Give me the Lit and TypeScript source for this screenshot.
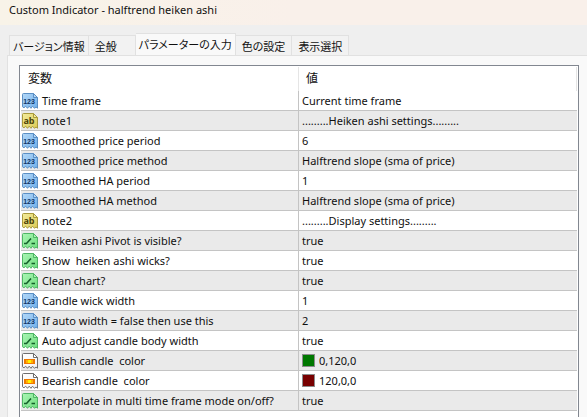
import { LitElement, html, svg, css } from "lit";
import { customElement, property, state } from "lit/decorators.js";

type Kind = "int" | "text" | "bool" | "color";
interface Row {
  kind: Kind;
  name: string;
  value: string;
  swatch?: string;
}

const ROWS: Row[] = [
  { kind: "int", name: "Time frame", value: "Current time frame" },
  { kind: "text", name: "note1", value: ".........Heiken ashi settings........." },
  { kind: "int", name: "Smoothed price period", value: "6" },
  { kind: "int", name: "Smoothed price method", value: "Halftrend slope (sma of price)" },
  { kind: "int", name: "Smoothed HA period", value: "1" },
  { kind: "int", name: "Smoothed HA method", value: "Halftrend slope (sma of price)" },
  { kind: "text", name: "note2", value: ".........Display settings........." },
  { kind: "bool", name: "Heiken ashi Pivot is visible?", value: "true" },
  { kind: "bool", name: "Show  heiken ashi wicks?", value: "true" },
  { kind: "bool", name: "Clean chart?", value: "true" },
  { kind: "int", name: "Candle wick width", value: "1" },
  { kind: "int", name: "If auto width = false then use this", value: "2" },
  { kind: "bool", name: "Auto adjust candle body width", value: "true" },
  { kind: "color", name: "Bullish candle  color", value: "0,120,0", swatch: "rgb(0,120,0)" },
  { kind: "color", name: "Bearish candle  color", value: "120,0,0", swatch: "rgb(120,0,0)" },
  { kind: "bool", name: "Interpolate in multi time frame mode on/off?", value: "true" },
];

const TABS = ["バージョン情報", "全般", "パラメーターの入力", "色の設定", "表示選択"];

const PALETTE: Record<Kind, { edge: string; light: string; deep: string; ink: string }> = {
  int: { edge: "#5b8fc4", light: "#b4d8f8", deep: "#70b0ea", ink: "#0f3566" },
  text: { edge: "#a89a3c", light: "#f3eb9c", deep: "#dccb55", ink: "#4a4208" },
  bool: { edge: "#4fb565", light: "#aaf5b4", deep: "#6fdf80", ink: "#14602a" },
  color: { edge: "#6e6e6e", light: "#ffffff", deep: "#f1f1f1", ink: "#f07800" },
};

@customElement("type-icon")
export class TypeIcon extends LitElement {
  @property() kind: Kind = "int";

  static styles = css`
    :host { display: block; width: 16px; height: 16px; }
    .icon { display: block; width: 16px; height: 16px; }
    .digits { font: bold 7px "Liberation Sans", sans-serif; }
    .letters { font: bold 9px "Open Sans", sans-serif; }
  `;

  private glyph(ink: string) {
    switch (this.kind) {
      case "int":
        return svg`<text class="digits" x="7" y="11" text-anchor="middle" fill=${ink}>123</text>`;
      case "text":
        return svg`<text class="letters" x="7" y="11" text-anchor="middle" fill=${ink}>ab</text>`;
      case "bool":
        return svg`<path d="M2 10.5H4.5L9 5.5M9.5 10.5H13" fill="none" stroke=${ink} stroke-width="1.6" />`;
      default:
        return svg`<rect x="2" y="6" width="11" height="5" fill=${ink} />
          <rect x="4" y="7" width="7" height="3" fill="#ffb400" />
          <rect x="6" y="7" width="3" height="3" fill="#fff000" />`;
    }
  }

  render() {
    const c = PALETTE[this.kind];
    return html`<svg class="icon" viewBox="0 0 16 16" aria-hidden="true">
      <defs>
        <linearGradient id="g" x1="0" y1="0" x2="1" y2="1">
          <stop offset="0" stop-color=${c.light} />
          <stop offset="1" stop-color=${c.deep} />
        </linearGradient>
      </defs>
      <path d="M.5 1.5Q.5.5 1.5.5H11.5L15.5 4.5V15.2L14 14L12.5 15.3L10.5 13.2L9 15.3L7.2 13.2L5.5 15.3L3.7 13.2L2 14.8L.5 13.8Z"
        fill="url(#g)" stroke=${c.edge} />
      <path d="M11.5.5V4.5H15.5Z" fill=${c.light} stroke=${c.edge} />
      ${this.glyph(c.ink)}
    </svg>`;
  }
}

@customElement("app-root")
export class AppRoot extends LitElement {
  @state() private active = 2;

  static styles = css`
    :host {
      display: flex;
      flex-direction: column;
      min-height: 100vh;
      background: #efefef;
      color: #101010;
      font: 11px/16px "Noto Sans", "Noto Sans CJK JP", sans-serif;
    }
    .title {
      margin: 0;
      height: 25px;
      padding-left: 9px;
      font-size: 11px;
      font-weight: 400;
      line-height: 20px;
      background: linear-gradient(90deg, #f8f3e8, #f9f0ea 50%);
    }
    .tabs {
      display: flex;
      align-items: flex-end;
      margin: 8px 0 0 9px;
      font-family: "Noto Sans CJK JP", sans-serif;
      font-feature-settings: "palt";
    }
    .tab {
      box-sizing: border-box;
      height: 20px;
      padding: 0 6px;
      border: 1px solid #e1e1e1;
      border-width: 1px 1px 0 0;
      background: #f2f2f2;
      color: inherit;
      font: inherit;
      font-feature-settings: inherit;
      white-space: nowrap;
    }
    .tab:first-child { border-left-width: 1px; }
    .tab.short { padding-right: 18px; }
    .tab.long { padding: 0 3px; }
    .tab.active {
      height: 23px;
      margin-bottom: -1px;
      padding-bottom: 3px;
      background: #f9f9f9;
    }
    .panel {
      flex: 1;
      display: flex;
      margin-left: 7px;
      padding: 9px 8px 0 11px;
      border: 1px solid #e1e1e1;
      border-width: 1px 0 0 1px;
      background: #f9f9f9;
    }
    .list {
      flex: 1;
      padding: 1px 1px 6px;
      border: 1px solid #828790;
      border-bottom: 0;
      background: #fff;
    }
    .grid {
      width: 100%;
      border-collapse: separate;
      border-spacing: 0;
      table-layout: fixed;
    }
    .name-col { width: 50%; }
    th {
      height: 24px;
      padding: 0 7px;
      border-right: 1px solid #e5e5e5;
      font-size: 12px;
      font-weight: 400;
      text-align: left;
    }
    td {
      height: 19px;
      padding: 0 3px 0 1px;
      border-bottom: 1px solid #c4c4c4;
      white-space: pre;
    }
    td:first-child { border-right: 1px solid #c4c4c4; }
    td:last-child { padding-left: 3px; }
    tbody tr:nth-child(even) { background: #eaeaea; }
    .cell { display: flex; align-items: center; gap: 4px; }
    .swatch {
      box-sizing: border-box;
      width: 13px;
      height: 13px;
      border: 1px solid #8c8c8c;
    }
  `;

  render() {
    return html`
      <h1 class="title">Custom Indicator - halftrend heiken ashi</h1>
      <div class="tabs" role="tablist">
        ${TABS.map(
          (t, i) => html`<button
            class="tab ${i === this.active ? "active" : ""} ${t.length < 3 ? "short" : t.length > 5 ? "long" : ""}"
            role="tab"
            aria-selected=${i === this.active}
            @click=${() => (this.active = i)}
          >${t}</button>`
        )}
      </div>
      <div class="panel" role="tabpanel">
        <div class="list">
          <table class="grid">
            <colgroup><col class="name-col" /><col /></colgroup>
            <thead><tr><th>変数</th><th>値</th></tr></thead>
            <tbody>
              ${ROWS.map(
                (r) => html`<tr>
                  <td><div class="cell"><type-icon .kind=${r.kind}></type-icon><span>${r.name}</span></div></td>
                  <td><div class="cell">${r.swatch
                    ? html`<span class="swatch" style="background:${r.swatch}"></span>`
                    : null}<span>${r.value}</span></div></td>
                </tr>`
              )}
            </tbody>
          </table>
        </div>
      </div>
    `;
  }
}
